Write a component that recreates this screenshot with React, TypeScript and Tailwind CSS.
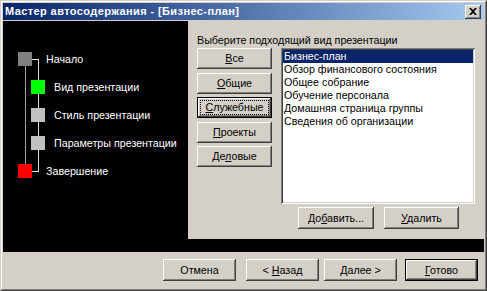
import React from "react";

const raised =
  "shadow-[inset_-1px_-1px_#404040,inset_1px_1px_#ffffff,inset_-2px_-2px_#808080,inset_2px_2px_#d4d0c8]";

interface BtnProps {
  children: React.ReactNode;
  isDefault?: boolean;
  focused?: boolean;
  className?: string;
}

const Btn: React.FC<BtnProps> = ({ children, isDefault, focused, className }) => {
  if (isDefault) {
    return (
      <div className={`flex border border-black bg-[#d4d0c8] ${className ?? ""}`}>
        <div className={`flex flex-1 items-center justify-center ${raised}`}>
          {focused ? (
            <div className="m-[2px] flex flex-1 self-stretch items-center justify-center border border-dotted border-black">
              {children}
            </div>
          ) : (
            children
          )}
        </div>
      </div>
    );
  }
  return (
    <div className={`flex items-center justify-center bg-[#d4d0c8] ${raised} ${className ?? ""}`}>
      {children}
    </div>
  );
};

const U = ({ children }: { children: React.ReactNode }) => <span className="underline underline-offset-1">{children}</span>;

const steps = [
  { label: "Начало", color: "bg-[#808080]", inner: false },
  { label: "Вид презентации", color: "bg-[#00ff00]", inner: true },
  { label: "Стиль презентации", color: "bg-[#c0c0c0]", inner: true },
  { label: "Параметры презентации", color: "bg-[#c0c0c0]", inner: true },
  { label: "Завершение", color: "bg-[#ff0000]", inner: false },
];

const items = [
  "Бизнес-план",
  "Обзор финансового состояния",
  "Общее собрание",
  "Обучение персонала",
  "Домашняя страница группы",
  "Сведения об организации",
];

export default function App() {
  return (
    <div className="w-[487px] h-[291px] border border-t-[#d4d0c8] border-l-[#d4d0c8] border-r-[#404040] border-b-[#404040] font-['Liberation_Sans',Arial,sans-serif] text-[10.7px] text-black select-none">
      <div className="flex h-full flex-col border border-white border-r-[#808080] border-b-[#808080] bg-[#d4d0c8] p-px">
        {/* Title bar */}
        <div className="flex h-[17px] items-center bg-gradient-to-r from-[#0a246a] to-[#a6caf0] pl-[2px] pr-[3px]">
          <span className="flex-1 text-[11px] font-bold leading-none tracking-[0.4px] text-white">
            Мастер автосодержания - [Бизнес-план]
          </span>
          <div className={`flex h-[14px] w-[16px] items-center justify-center bg-[#d4d0c8] ${raised}`}>
            <svg width="8" height="7" viewBox="0 0 8 7">
              <path d="M0 0h2l2 2 2-2h2L5 3.5 8 7H6L4 5 2 7H0l3-3.5z" fill="#000" />
            </svg>
          </div>
        </div>

        {/* Main black area */}
        <div className="mt-[1px] flex flex-col bg-black pb-[13px]">
          <div className="flex h-[218px]">
            {/* Steps */}
            <div className="relative w-[185px] pt-[24px] text-white">
              <svg className="absolute inset-0" width="185" height="218">
                <line x1="22.5" y1="45" x2="22.5" y2="143" stroke="#a0a0a0" strokeWidth="1" />
                <line x1="35.5" y1="38" x2="35.5" y2="151" stroke="#e0e0e0" strokeWidth="1" />
                <line x1="29" y1="38.5" x2="36" y2="38.5" stroke="#e0e0e0" strokeWidth="1" />
                <line x1="29" y1="150.5" x2="36" y2="150.5" stroke="#e0e0e0" strokeWidth="1" />
              </svg>
              {steps.map((s) => (
                <div
                  key={s.label}
                  className={`relative flex h-[28px] items-center ${s.inner ? "pl-[28px]" : "pl-[15px]"}`}
                >
                  <div className={`h-[14px] w-[14px] ${s.color}`} />
                  <span className={s.inner ? "ml-[9px]" : "ml-[14px]"}>{s.label}</span>
                </div>
              ))}
            </div>

            {/* Gray panel */}
            <div className="flex flex-1 flex-col bg-[#d4d0c8] pl-[9px] pr-[9px] pt-[12px]">
              <div className="h-[15px] leading-[15px]">Выберите подходящий вид презентации</div>
              <div className="flex">
                <div className="flex w-[75px] flex-col gap-[3.5px]">
                  <Btn className="h-[21px]">
                    <span>
                      <U>В</U>се
                    </span>
                  </Btn>
                  <Btn className="h-[21px]">
                    <span>
                      <U>О</U>бщие
                    </span>
                  </Btn>
                  <Btn className="h-[21px]" isDefault focused>
                    <span>
                      <U>С</U>лужебные
                    </span>
                  </Btn>
                  <Btn className="h-[21px]">
                    <span>
                      <U>П</U>роекты
                    </span>
                  </Btn>
                  <Btn className="h-[21px]">
                    <span>
                      Де<U>л</U>овые
                    </span>
                  </Btn>
                </div>
                <div className="ml-[9px] flex flex-1 flex-col">
                  <div className="h-[156px] bg-white p-[2px] shadow-[inset_1px_1px_#808080,inset_-1px_-1px_#ffffff,inset_2px_2px_#404040,inset_-2px_-2px_#d4d0c8]">
                    {items.map((it, i) => (
                      <div
                        key={it}
                        className={`h-[13px] pl-[1px] leading-[13px] ${i === 0 ? "bg-[#0a246a] text-white" : ""}`}
                      >
                        {it}
                      </div>
                    ))}
                  </div>
                  <div className="mt-[3px] flex gap-[10px] pl-[17px]">
                    <Btn className="h-[22px] w-[76px]">
                      <span>
                        До<U>б</U>авить...
                      </span>
                    </Btn>
                    <Btn className="h-[22px] w-[75px]">
                      <span>
                        <U>У</U>далить
                      </span>
                    </Btn>
                  </div>
                </div>
              </div>
            </div>
          </div>
        </div>

        {/* Bottom buttons */}
        <div className="flex flex-1 items-start justify-end pr-[6px] pt-[7px]">
          <Btn className="h-[22px] w-[73px]">Отмена</Btn>
          <Btn className="ml-[10px] h-[22px] w-[73px]">
            <span>
              &lt; <U>Н</U>азад
            </span>
          </Btn>
          <Btn className="ml-[5px] h-[22px] w-[73px]">
            <span>
              <U>Д</U>алее &gt;
            </span>
          </Btn>
          <Btn className="ml-[8px] h-[22px] w-[73px]" isDefault>
            <span>
              <U>Г</U>отово
            </span>
          </Btn>
        </div>
      </div>
    </div>
  );
}
